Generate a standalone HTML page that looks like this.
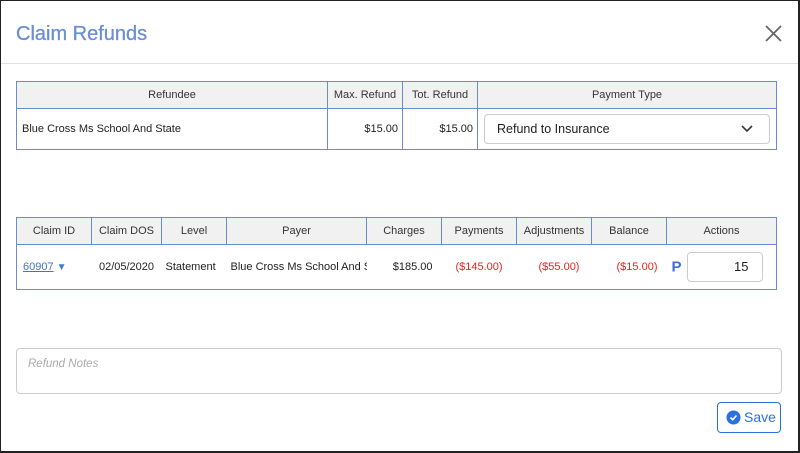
<!DOCTYPE html>
<html><head><style>
*{box-sizing:border-box;margin:0;padding:0}
body{width:800px;height:453px;background:#fff;font-family:"Liberation Sans",Arial,sans-serif;position:relative;overflow:hidden}
.frame{position:absolute;left:0;top:0;width:800px;height:453px;border:1px solid #222;border-right:2px solid #222;border-bottom:2px solid #222}
.title{position:absolute;left:16px;top:23px;font-size:20px;color:#6b8fd2;-webkit-text-stroke:0.3px #6b8fd2}
.hr{position:absolute;left:1px;right:2px;top:63px;height:1px;background:#dde1e6}
table{position:absolute;border-collapse:collapse;font-size:11px;color:#222}
td,th{border:1px solid #6b8bd0;padding:0 4px}
th{background:#f1f1f1;font-weight:normal;color:#333;height:27px}
.r{text-align:right}.c{text-align:center}
.red{color:#f02020}
.nb{border:none;border-bottom:1px solid #6b8bd0}
</style></head><body>
<div class="frame"></div>
<div class="title">Claim Refunds</div>
<svg style="position:absolute;left:765px;top:25px" width="17" height="17"><path d="M1 1L16 16M16 1L1 16" stroke="#666" stroke-width="1.8"/></svg>
<div class="hr"></div>
<table style="left:16px;top:81px;width:761px">
<tr><th style="width:311px">Refundee</th><th style="width:75px">Max. Refund</th><th style="width:75px">Tot. Refund</th><th>Payment Type</th></tr>
<tr style="height:41px"><td style="padding-left:5px">Blue Cross Ms School And State</td><td class="r">$15.00</td><td class="r">$15.00</td><td style="padding:0 6px"><div style="border:1px solid #ccc;border-radius:4px;height:30px;font-size:12.5px;line-height:28px;padding-left:12px;position:relative">Refund to Insurance<svg style="position:absolute;right:16px;top:10px" width="12" height="8"><path d="M1 1L6 6L11 1" stroke="#333" stroke-width="1.6" fill="none"/></svg></div></td></tr>
</table>
<table style="left:16px;top:217px;width:761px">
<tr><th style="width:75px">Claim ID</th><th style="width:70px">Claim DOS</th><th style="width:65px">Level</th><th style="width:140px">Payer</th><th style="width:75px">Charges</th><th style="width:75px">Payments</th><th style="width:75px">Adjustments</th><th style="width:75px">Balance</th><th>Actions</th></tr>
<tr style="height:45px"><td style="border-right:none;padding-left:6px"><span style="color:#4a6fc4;text-decoration:underline">60907</span> <span style="color:#3b7bdc;font-size:10px">&#9660;</span></td>
<td class="nb c">02/05/2020</td>
<td class="nb">Statement</td>
<td class="nb" style="white-space:nowrap;overflow:hidden;max-width:140px">Blue Cross Ms School And St</td>
<td class="nb r" style="padding-right:9px">$185.00</td>
<td class="nb c red">($145.00)</td>
<td class="nb c red" style="padding-left:14px">($55.00)</td>
<td class="nb r red" style="padding-right:9px">($15.00)</td>
<td style="border-left:none;padding-left:5px"><span style="color:#3b6fd8;font-size:15px;font-weight:bold;vertical-align:middle">P</span><div style="display:inline-block;vertical-align:middle;margin-left:5px;width:76px;height:30px;border:1px solid #ccc;border-radius:4px;text-align:right;padding-right:13px;line-height:28px;font-size:13px">15</div></td></tr>
</table>
<div style="position:absolute;left:16px;top:348px;width:766px;height:46px;border:1px solid #ccc;border-radius:4px;font-size:11.5px;font-style:italic;color:#aaa;padding:9px 11px">Refund Notes</div>
<div style="position:absolute;left:717px;top:402px;width:64px;height:31px;border:1px solid #2b6fe0;border-radius:4px;color:#2b6fe0;font-size:14px;line-height:29px;padding-left:26px">Save
<svg style="position:absolute;left:8px;top:7px" width="15" height="15"><circle cx="7.5" cy="7.5" r="7" fill="#2b6fe0"/><path d="M4.5 7.5L6.7 9.7L10.5 5.5" stroke="#fff" stroke-width="1.6" fill="none"/></svg></div>
</body></html>
